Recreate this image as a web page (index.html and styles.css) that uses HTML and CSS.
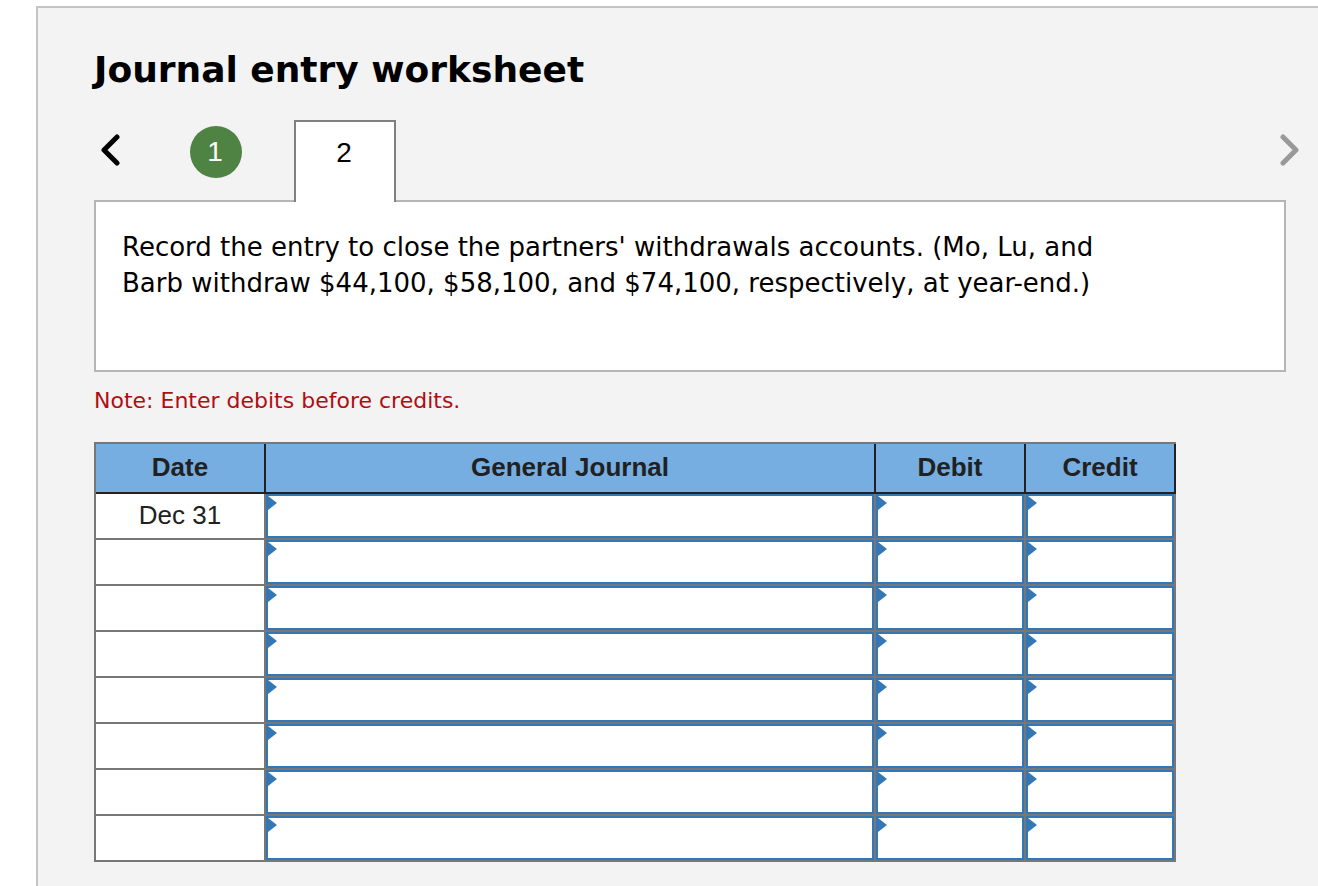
FILE: index.html
```html
<!DOCTYPE html>
<html lang="en">
<head>
  <meta charset="utf-8">
  <title>Journal entry worksheet</title>
  <link rel="stylesheet" href="styles.css">
</head>
<body>
  <main class="worksheet">
    <h1>Journal entry worksheet</h1>

    <nav class="steps" aria-label="Journal entries">
      <button type="button" class="arrow" aria-label="Previous entry">
        <svg width="20" height="32" viewBox="0 0 20 32"><path d="M17 3 4 16 17 29"/></svg>
      </button>
      <button type="button" class="step done">1</button>
      <button type="button" class="step current" aria-current="step">2</button>
      <button type="button" class="arrow next" aria-label="Next entry" disabled>
        <svg width="20" height="32" viewBox="0 0 20 32"><path d="M3 3 16 16 3 29"/></svg>
      </button>
    </nav>

    <section class="question">
      <p>Record the entry to close the partners' withdrawals accounts. (Mo, Lu, and Barb withdraw $44,100, $58,100, and $74,100, respectively, at year-end.)</p>
    </section>

    <p class="note">Note: Enter debits before credits.</p>

    <table class="journal">
      <thead>
        <tr>
          <th class="date" scope="col">Date</th>
          <th class="account" scope="col">General Journal</th>
          <th class="amount" scope="col">Debit</th>
          <th class="amount" scope="col">Credit</th>
        </tr>
      </thead>
      <tbody>
        <tr>
          <td>Dec 31</td>
          <td class="entry"><input type="text" aria-label="Account, line 1"></td>
          <td class="entry"><input type="text" aria-label="Debit, line 1"></td>
          <td class="entry"><input type="text" aria-label="Credit, line 1"></td>
        </tr>
        <tr>
          <td></td>
          <td class="entry"><input type="text" aria-label="Account, line 2"></td>
          <td class="entry"><input type="text" aria-label="Debit, line 2"></td>
          <td class="entry"><input type="text" aria-label="Credit, line 2"></td>
        </tr>
        <tr>
          <td></td>
          <td class="entry"><input type="text" aria-label="Account, line 3"></td>
          <td class="entry"><input type="text" aria-label="Debit, line 3"></td>
          <td class="entry"><input type="text" aria-label="Credit, line 3"></td>
        </tr>
        <tr>
          <td></td>
          <td class="entry"><input type="text" aria-label="Account, line 4"></td>
          <td class="entry"><input type="text" aria-label="Debit, line 4"></td>
          <td class="entry"><input type="text" aria-label="Credit, line 4"></td>
        </tr>
        <tr>
          <td></td>
          <td class="entry"><input type="text" aria-label="Account, line 5"></td>
          <td class="entry"><input type="text" aria-label="Debit, line 5"></td>
          <td class="entry"><input type="text" aria-label="Credit, line 5"></td>
        </tr>
        <tr>
          <td></td>
          <td class="entry"><input type="text" aria-label="Account, line 6"></td>
          <td class="entry"><input type="text" aria-label="Debit, line 6"></td>
          <td class="entry"><input type="text" aria-label="Credit, line 6"></td>
        </tr>
        <tr>
          <td></td>
          <td class="entry"><input type="text" aria-label="Account, line 7"></td>
          <td class="entry"><input type="text" aria-label="Debit, line 7"></td>
          <td class="entry"><input type="text" aria-label="Credit, line 7"></td>
        </tr>
        <tr>
          <td></td>
          <td class="entry"><input type="text" aria-label="Account, line 8"></td>
          <td class="entry"><input type="text" aria-label="Debit, line 8"></td>
          <td class="entry"><input type="text" aria-label="Credit, line 8"></td>
        </tr>
      </tbody>
    </table>
  </main>
</body>
</html>
```

FILE: styles.css
```css
* {
  box-sizing: border-box;
}

body {
  margin: 0;
  background: #fff;
  color: #000;
  font-family: Verdana, "DejaVu Sans", sans-serif;
}

.worksheet {
  margin: 6px 0 0 36px;
  padding: 36px 0 24px 56px;
  border-top: 2px solid #c4c4c4;
  border-left: 2px solid #c4c4c4;
  background: #f3f3f3;
}

h1 {
  margin: 0 0 24px;
  font-size: 36px;
  line-height: 52px;
}

/* entry tabs */
.steps {
  display: flex;
  align-items: flex-start;
}

.arrow {
  margin-top: 12px;
  padding: 2px 6px;
  border: none;
  background: none;
  color: #000;
}

.arrow svg {
  display: block;
  fill: none;
  stroke: currentColor;
  stroke-width: 5;
  stroke-linecap: round;
  stroke-linejoin: round;
}

.arrow.next {
  margin-left: auto;
  padding-right: 18px;
  color: #999;
}

.step {
  padding: 0;
  border: none;
  font-family: Arial, "Liberation Sans", sans-serif;
  font-size: 28px;
  line-height: 52px;
}

.step.done {
  width: 52px;
  height: 52px;
  margin: 6px 52px 0 64px;
  padding-right: 2px;
  border-radius: 50%;
  background: #4e8344;
  color: #fff;
}

/* the open tab covers the top border of the question box */
.step.current {
  position: relative;
  width: 102px;
  height: 82px;
  margin-bottom: -2px;
  padding: 4px 2px 22px 0;
  border: 2px solid #808080;
  border-bottom: none;
  background: #fff;
  color: #000;
}

.question {
  min-height: 172px;
  margin-right: 32px;
  padding: 27px 140px 27px 26px;
  border: 2px solid #b5b5b5;
  background: #fff;
}

.question p {
  margin: 0;
  font-size: 26px;
  line-height: 36px;
}

.note {
  margin: 13px 0 25px;
  color: #b00d12;
  font-size: 22px;
  line-height: 32px;
}

/* journal table */
.journal {
  width: calc(100% - 32px);
  max-width: 1082px;
  table-layout: fixed;
  border-spacing: 0;
  border-top: 2px solid #777;
  border-left: 2px solid #777;
  color: #212121;
  font-family: Arial, "Liberation Sans", sans-serif;
  font-size: 26px;
  line-height: 30px;
  text-align: center;
}

.journal th {
  height: 50px;
  padding: 0 0 2px;
  border-right: 2px solid #212121;
  border-bottom: 2px solid #212121;
  background: #76aee1;
}

.journal td {
  height: 46px;
  padding: 0 0 2px;
  border-right: 2px solid #777;
  border-bottom: 2px solid #777;
  background: #fff;
}

.journal .date {
  width: 170px;
}

.journal .amount {
  width: 150px;
}

.journal .entry {
  position: relative;
  padding: 0;
}

.entry input {
  display: block;
  width: 100%;
  height: 44px;
  padding: 0 12px;
  border: 2px solid #3377b6;
  border-radius: 0;
  background: #fff;
  font: inherit;
}

.entry::before {
  content: "";
  position: absolute;
  top: 2px;
  left: 2px;
  width: 9px;
  height: 14px;
  background: #3377b6;
  clip-path: polygon(0 0, 100% 50%, 0 100%);
}
```
